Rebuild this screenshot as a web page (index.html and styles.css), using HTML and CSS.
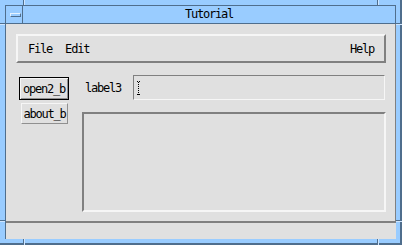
FILE: index.html
```html
<!DOCTYPE html>
<html lang="en">
<head>
  <meta charset="UTF-8" />
  <title>Tutorial</title>
  <link rel="stylesheet" href="styles.css">
</head>
<body>
  <div class="window">
    <span class="notch v top left-n"></span>
    <span class="notch v top right-n"></span>
    <span class="notch v bottom left-n"></span>
    <span class="notch v bottom right-n"></span>
    <span class="notch h upper left-h"></span>
    <span class="notch h upper right-h"></span>
    <span class="notch h lower left-h"></span>
    <span class="notch h lower right-h"></span>

    <div class="frame">
      <div class="titlebar">
        <div class="winmenu"><span class="winmenu-icon"></span></div>
        <div class="title">Tutorial</div>
      </div>

      <div class="client">
        <div class="main">
          <div class="menubar">
            <span class="menu">File</span>
            <span class="menu">Edit</span>
            <span class="menu help">Help</span>
          </div>

          <div class="content">
            <div class="buttons">
              <button class="btn default">open2_b</button>
              <button class="btn">about_b</button>
            </div>
            <div class="form">
              <div class="field-row">
                <span class="label">label3</span>
                <div class="field">
                  <svg class="ibeam" width="3" height="14" viewBox="0 0 3 14">
                    <rect x="0" y="0" width="1" height="1" fill="#000"/>
                    <rect x="2" y="0" width="1" height="1" fill="#000"/>
                    <rect x="1" y="1" width="1" height="1" fill="#000"/>
                    <rect x="1" y="3" width="1" height="1" fill="#000"/>
                    <rect x="1" y="5" width="1" height="1" fill="#000"/>
                    <rect x="1" y="7" width="1" height="1" fill="#000"/>
                    <rect x="1" y="9" width="1" height="1" fill="#000"/>
                    <rect x="1" y="11" width="1" height="1" fill="#000"/>
                    <rect x="0" y="13" width="1" height="1" fill="#000"/>
                    <rect x="1" y="13" width="1" height="1" fill="#000"/>
                    <rect x="2" y="13" width="1" height="1" fill="#000"/>
                  </svg>
                </div>
              </div>
              <div class="textarea"></div>
            </div>
          </div>
        </div>
        <div class="status"></div>
      </div>
    </div>
  </div>
</body>
</html>
```

FILE: styles.css
```css
body {
  margin: 0;
  font-family: "DejaVu Sans Mono", monospace;
  font-size: 12px;
  letter-spacing: -1.2px;
  color: #000;
}

.window {
  position: relative;
  width: 402px;
  height: 245px;
  box-sizing: border-box;
  padding: 5px 6px 6px 5px;
  background: #99ccff;
  box-shadow: inset -2px -2px 0 #4f6e8d;
  display: flex;
}

/* resize handle marks on the frame */
.notch {
  position: absolute;
  background: #4f6e8d;
}

.notch.v {
  width: 1px;
  height: 5px;
  box-shadow: 1px 0 0 #cfe6ff;
}

.notch.h {
  width: 5px;
  height: 1px;
  box-shadow: 0 1px 0 #cfe6ff;
}

.notch.top { top: 0; }
.notch.bottom { bottom: 0; height: 6px; }
.notch.left-n { left: 23px; }
.notch.right-n { left: 377px; }
.notch.upper { top: 23px; }
.notch.lower { top: 220px; }
.notch.left-h { left: 0; }
.notch.right-h { left: 396px; width: 6px; }

.frame {
  flex: 1;
  display: flex;
  flex-direction: column;
  border-left: 1px solid #4f6e8d;
  border-top: 1px solid #4f6e8d;
}

.titlebar {
  height: 18px;
  display: flex;
  border-bottom: 1px solid #4f6e8d;
  box-sizing: border-box;
}

.winmenu {
  width: 17px;
  border-right: 1px solid #4f6e8d;
  display: flex;
  align-items: flex-start;
  padding-top: 7px;
  box-sizing: border-box;
}

.winmenu-icon {
  width: 9px;
  height: 2px;
  border: 1px solid;
  border-color: #e4f2ff #4f6e8d #4f6e8d #e4f2ff;
  margin-left: 4px;
}

.title {
  flex: 1;
  text-align: center;
  line-height: 17px;
  border-right: 1px solid #4f6e8d;
}

.client {
  flex: 1;
  display: flex;
  flex-direction: column;
  background: #e0e0e0;
}

.main {
  flex: 1;
  padding: 10px 9px 0 10px;
  border-bottom: 2px solid #808080;
  border-right: 1px solid #808080;
}

.menubar {
  height: 29px;
  box-sizing: border-box;
  border: 2px solid;
  border-color: #f6f6f6 #808080 #808080 #f6f6f6;
  display: flex;
  align-items: center;
  padding: 0 10px;
}

.menu {
  margin-right: 13px;
}

.menu.help {
  margin-left: auto;
  margin-right: 0;
}

.content {
  display: flex;
  margin-top: 12px;
}

.buttons {
  width: 66px;
  display: flex;
  flex-direction: column;
  align-items: flex-start;
  padding-top: 2px;
}

.btn {
  font: inherit;
  letter-spacing: inherit;
  color: #000;
  background: #e0e0e0;
  border: 1px solid;
  border-color: #f6f6f6 #909090 #909090 #f6f6f6;
  padding: 0;
  margin: 0 0 0 5px;
  width: 47px;
  height: 21px;
}

.btn.default {
  margin: 0 0 3px 3px;
  width: 50px;
  height: 23px;
  border-color: #000;
  box-shadow: inset 1px 1px 0 #f6f6f6, inset -1px -1px 0 #909090;
}

.form {
  width: 304px;
}

.field-row {
  display: flex;
  align-items: center;
}

.label {
  width: 48px;
  padding-left: 3px;
}

.field {
  width: 252px;
  height: 25px;
  box-sizing: border-box;
  border: 1px solid;
  border-color: #808080 #f6f6f6 #f6f6f6 #808080;
  padding: 5px 3px;
}

.ibeam {
  display: block;
}

.textarea {
  margin-top: 12px;
  height: 100px;
  box-sizing: border-box;
  border: 2px solid;
  border-color: #808080 #f6f6f6 #f6f6f6 #808080;
}

.status {
  height: 16px;
}
```
